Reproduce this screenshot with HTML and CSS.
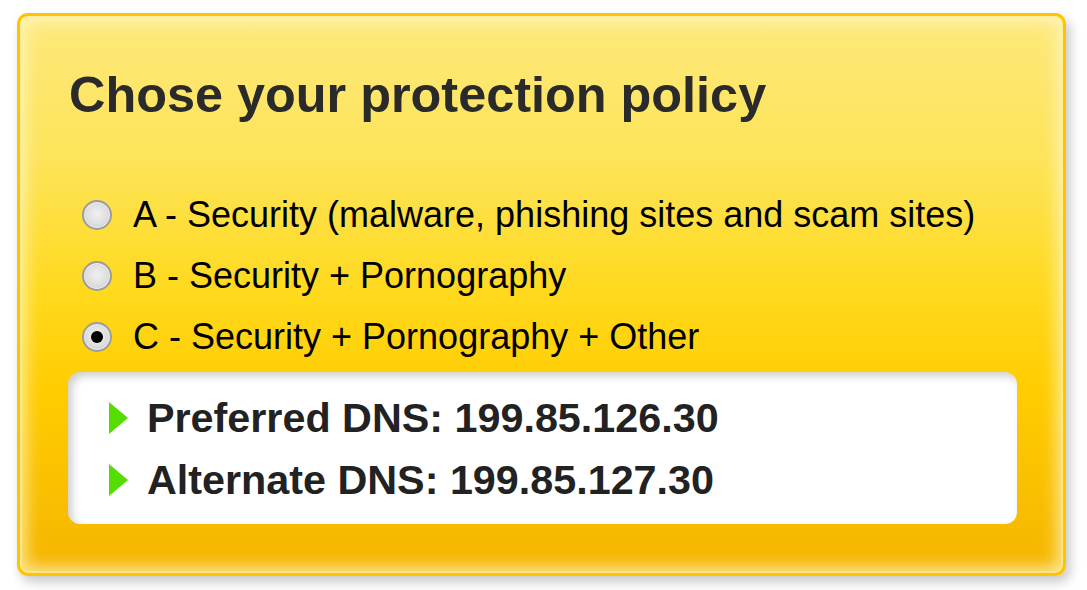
FILE: index.html
```html
<!DOCTYPE html>
<html>
<head>
<meta charset="utf-8">
<link rel="stylesheet" href="styles.css">
</head>
<body>
<div class="panel">
  <h1 class="title">Chose your protection policy</h1>
  <ul class="options">
    <li class="option"><span class="radio"></span><span>A - Security (malware, phishing sites and scam sites)</span></li>
    <li class="option"><span class="radio"></span><span>B - Security + Pornography</span></li>
    <li class="option"><span class="radio checked"></span><span>C - Security + Pornography + Other</span></li>
  </ul>
  <div class="dns">
    <div class="dns-line"><span class="arrow"></span><span>Preferred DNS: 199.85.126.30</span></div>
    <div class="dns-line"><span class="arrow"></span><span>Alternate DNS: 199.85.127.30</span></div>
  </div>
</div>
</body>
</html>
```

FILE: styles.css
```css
html, body {
  margin: 0;
  padding: 0;
  background: #ffffff;
}
body {
  font-family: "Liberation Sans", Arial, sans-serif;
  width: 1087px;
  height: 590px;
  overflow: hidden;
}
.panel {
  box-sizing: border-box;
  margin: 13px 0 0 17px;
  width: 1049px;
  height: 563px;
  border: 3px solid #ffc400;
  border-radius: 11px;
  padding: 50px 46px 0 49px;
  background: linear-gradient(to bottom, #fde97c 0%, #fde45a 25%, #ffd91c 50%, #ffcc00 68%, #f5b500 100%);
  box-shadow:
    inset 0 0 0 2px rgba(255, 236, 150, 0.7),
    inset 0 0 16px 6px rgba(255, 250, 210, 0.7),
    4px 6px 12px rgba(0, 0, 0, 0.22);
}
.title {
  margin: 0;
  font-size: 50.4px;
  line-height: 58px;
  font-weight: bold;
  color: #2a2a2a;
}
.options {
  list-style: none;
  margin: 60px 0 0 0;
  padding: 0;
}
.option {
  display: flex;
  align-items: center;
  height: 61px;
  font-size: 36px;
  color: #000;
  padding-left: 13px;
}
.radio {
  box-sizing: border-box;
  width: 30px;
  height: 30px;
  border-radius: 50%;
  margin-right: 21px;
  border: 2px solid #9c9c9c;
  background: radial-gradient(circle at 50% 45%, #f0f0f0 0%, #e0e0e0 50%, #d6d6d6 70%, #f6f6f6 100%);
  box-shadow: inset 0 0 0 1px #ececec;
  display: flex;
  align-items: center;
  justify-content: center;
  flex-shrink: 0;
}
.radio.checked::after {
  content: "";
  width: 12px;
  height: 12px;
  border-radius: 50%;
  background: #000;
}
.dns {
  margin-top: 5px;
  margin-left: -1px;
  background: #ffffff;
  border-radius: 12px;
  height: 152px;
  box-sizing: border-box;
  padding: 15px 0 0 41px;
  box-shadow: inset 4px 4px 8px rgba(0, 0, 0, 0.2);
}
.dns-line {
  display: flex;
  align-items: center;
  height: 62px;
  font-size: 41.3px;
  font-weight: bold;
  color: #222;
}
.arrow {
  width: 0;
  height: 0;
  border-top: 16px solid transparent;
  border-bottom: 16px solid transparent;
  border-left: 19px solid #55dd00;
  margin-right: 19px;
  flex-shrink: 0;
}
```
